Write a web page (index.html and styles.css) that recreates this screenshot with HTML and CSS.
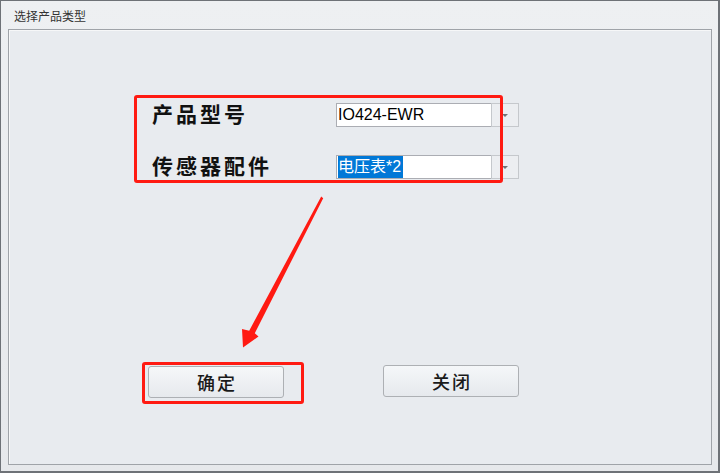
FILE: index.html
```html
<!DOCTYPE html>
<html lang="zh">
<head>
<meta charset="utf-8">
<link rel="stylesheet" href="styles.css">
</head>
<body>
<div class="window">
  <div class="titlebar">选择产品类型</div>
  <div class="panel">
    <div class="form">
      <div class="row">
        <div class="label">产品型号</div>
        <div class="combo">
          <div class="field">IO424-EWR</div>
          <div class="drop"><span class="tri"></span></div>
        </div>
      </div>
      <div class="row">
        <div class="label">传感器配件</div>
        <div class="combo">
          <div class="field"><span class="sel">电压表*2</span></div>
          <div class="drop"><span class="tri"></span></div>
        </div>
      </div>
    </div>
    <div class="buttons">
      <button class="btn btn-ok">确定</button>
      <button class="btn">关闭</button>
    </div>
  </div>
  <div class="mark mark-form"></div>
  <div class="mark mark-ok"></div>
  <svg class="arrow" width="720" height="473" viewBox="0 0 720 473">
    <polygon points="321.2,196.5 323.2,198.2 254.8,333.2 258.5,336.5 243,347.5 242,329 249.2,330.8" fill="#ff1a12"/>
  </svg>
</div>
</body>
</html>
```
FILE: styles.css
```css
html, body {
  margin: 0;
  padding: 0;
  background: #e9ebee;
}
.window {
  position: relative;
  width: 720px;
  height: 473px;
  box-sizing: border-box;
  border-style: solid;
  border-color: #6e7277;
  border-width: 1px 2px 2px 1px;
  background: linear-gradient(#eef0f2, #e6e8eb);
  display: flex;
  flex-direction: column;
  overflow: hidden;
}
.titlebar {
  height: 28px;
  flex: none;
  box-sizing: border-box;
  padding: 7px 0 0 13px;
  font-family: "Noto Sans CJK SC", sans-serif;
  font-size: 12px;
  line-height: 16px;
  color: #333;
}
.panel {
  margin: 0 6px 6px 7px;
  height: 436px;
  box-sizing: border-box;
  border: 1px solid #9fa3a8;
  box-shadow: inset 1px 1px 0 #f6f7f8;
  background: #e8ebef;
}
.form {
  padding: 73px 0 0 143px;
  display: flex;
  flex-direction: column;
  gap: 28px;
}
.row {
  display: flex;
  align-items: center;
  height: 24px;
}
.label {
  width: 184px;
  flex: none;
  box-sizing: border-box;
  padding-bottom: 4px;
  font-family: "Noto Sans CJK SC", sans-serif;
  font-weight: 700;
  font-size: 21px;
  letter-spacing: 3px;
  color: #111;
  line-height: 24px;
}
.combo {
  display: flex;
  width: 183px;
  height: 24px;
}
.field {
  width: 155px;
  box-sizing: border-box;
  border: 1px solid #abadb3;
  border-right: none;
  background: #fff;
  padding: 0 0 0 1px;
  font-family: "Liberation Sans", "Noto Sans CJK SC", sans-serif;
  font-size: 16px;
  line-height: 22px;
  color: #000;
  white-space: nowrap;
  overflow: hidden;
}
.sel {
  display: inline-block;
  background: #0078d7;
  color: #fff;
  line-height: 22px;
  padding-right: 2px;
}
.drop {
  width: 28px;
  box-sizing: border-box;
  border: 1px solid #c5c8cc;
  background: #eceef1;
  display: flex;
  align-items: center;
  justify-content: center;
}
.tri {
  width: 0;
  height: 0;
  border-left: 3px solid transparent;
  border-right: 3px solid transparent;
  border-top: 3px solid #6f7275;
}
.buttons {
  display: flex;
  align-items: flex-start;
  gap: 99px;
  margin: 186px 0 0 139px;
}
.btn {
  width: 136px;
  height: 32px;
  box-sizing: border-box;
  border: 1px solid #adb0b4;
  border-radius: 3px;
  background: linear-gradient(#f5f7f9, #e6e9ed);
  font-family: "Noto Sans CJK SC", sans-serif;
  font-weight: 500;
  font-size: 18px;
  letter-spacing: 2px;
  color: #1a1a1a;
  padding: 0 0 0 2px;
  line-height: 28px;
}
.btn-ok {
  margin-top: 1px;
}
.mark {
  position: absolute;
  border: 3px solid #ff1a12;
  border-radius: 3px;
  box-sizing: border-box;
  pointer-events: none;
}
.mark-form {
  left: 133px;
  top: 94px;
  width: 369px;
  height: 88px;
}
.mark-ok {
  left: 141px;
  top: 361px;
  width: 162px;
  height: 42px;
}
.arrow {
  position: absolute;
  left: -1px;
  top: -1px;
  pointer-events: none;
}
```
